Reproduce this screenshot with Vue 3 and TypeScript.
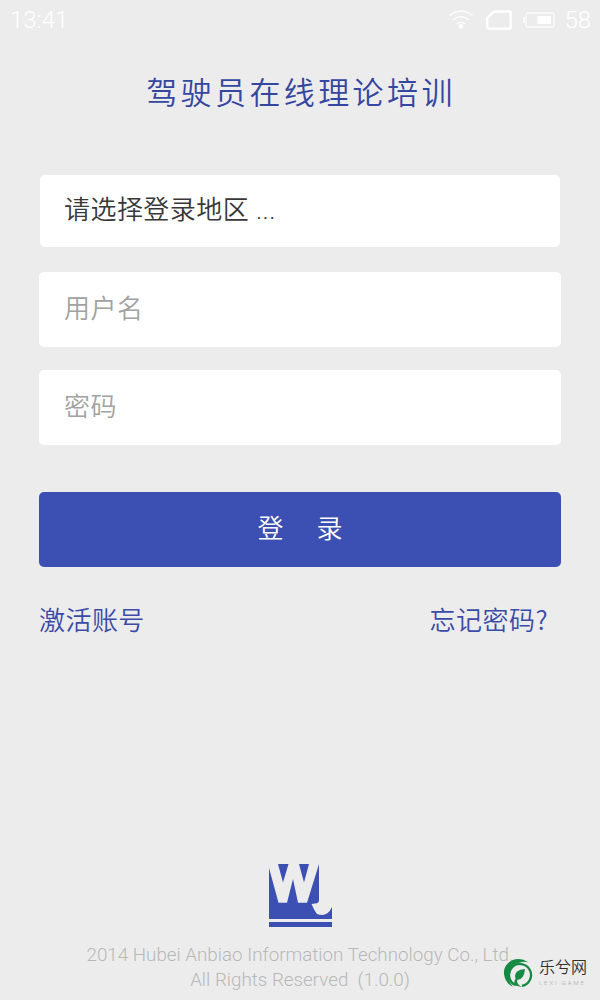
<script setup lang="ts">
import { ref } from 'vue'

const username = ref('')
const password = ref('')
const region = ref('请选择登录地区 ...')
const battery = 58
</script>

<template>
  <main class="screen">
    <header class="status">
      <span class="time">13:41</span>
      <svg class="wifi" width="26" height="22" viewBox="0 0 26 22" fill="none" stroke="#fff">
        <path d="M1.5 6.5Q13-2 24.500 6.500M5 11Q13 4.500 21 11M8.500 15Q13 11.500 17.500 15" stroke-width="1.500" opacity=".85" />
        <circle cx="13" cy="17.500" r="2.300" fill="#fff" stroke="none" />
      </svg>
      <svg class="sim" width="26" height="21" viewBox="0 0 26 21" fill="none">
        <path d="M8 1.500H23Q24.700 1.500 24.700 3.200V17Q24.700 18.700 23 18.700H3Q1.300 18.700 1.300 17V8Z" stroke="#fff" stroke-width="2.300" />
      </svg>
      <svg class="battery" width="32" height="16" viewBox="0 0 32 16">
        <rect x="3" y="1" width="28" height="14" rx="2" fill="none" stroke="#fff" stroke-width="1.300" opacity=".75" />
        <path d="M1 5V11" stroke="#fff" stroke-width="2" opacity=".75" />
        <rect x="14.500" y="4" width="13.500" height="8" fill="#fff" />
      </svg>
      <span class="level">{{ battery }}</span>
    </header>

    <h1>驾驶员在线理论培训</h1>

    <form @submit.prevent>
      <button type="button" class="field region">{{ region }}</button>
      <input v-model="username" class="field" type="text" placeholder="用户名" />
      <input v-model="password" class="field" type="password" placeholder="密码" />
      <button type="submit" class="submit"><span>登</span><span>录</span></button>
    </form>

    <nav class="links">
      <a>激活账号</a>
      <a>忘记密码?</a>
    </nav>

    <footer>
      <svg class="logo" width="63" height="63" viewBox="0 0 63 63" fill="#3b50b2">
        <path d="M0 4L9.500 38.700H18L24 15L29 38.700H38L50 0V36Q50 39.500 46 39.500L42.500 40Q45 46 48 50Q58 54 63 43V55H0Z" />
        <path d="M9 0H19.500L14 18.500ZM30 0H40L35 18.500Z" />
        <path d="M0 58H63V63H0Z" />
      </svg>
      <p>2014 Hubei Anbiao Information Technology Co., Ltd.</p>
      <p>All Rights Reserved&nbsp; (1.0.0)</p>
    </footer>

    <aside class="mark">
      <svg width="31" height="31" viewBox="0 0 31 31">
        <path d="M25.500 4.500C14-4 0 4 1 16Q2 25 10 29Q5 23 6 16Q8 5 19 4Q23 3.500 25.500 4.500Z" fill="#168a43" />
        <path d="M12.500 27A11 11 0 1 1 19 27.800" fill="none" stroke="#168a43" stroke-width="2.300" />
        <path d="M22 11Q12 12 12 18Q12 21 14 22Q21 22 22 11ZM13 20Q10 24 12 27.500L19 29Q12 26 15 20Z" fill="#168a43" />
      </svg>
      <div class="mark-text">
        <strong>乐兮网</strong>
        <small>LEXI GAME</small>
      </div>
    </aside>
  </main>
</template>

<style>
body { margin: 0; background: #ececec; }
</style>

<style scoped>
* { box-sizing: border-box; }
.screen {
  position: relative;
  width: 600px;
  height: 1000px;
  display: flex;
  flex-direction: column;
  overflow: hidden;
  background: #ececec;
  font-family: Roboto, "Noto Sans CJK SC", sans-serif;
  font-weight: 350;
}
.status {
  height: 40px;
  flex: none;
  display: flex;
  align-items: center;
  padding: 0 9px 0 10px;
  color: #fff;
  font-size: 24px;
}
.time { margin-right: auto; }
.sim { margin-left: 12px; }
.battery { margin: 0 9px 0 11px; }
h1 {
  margin: 31px 0 0;
  height: 45px;
  line-height: 45px;
  padding-left: 2px;
  text-align: center;
  font-size: 31px;
  font-weight: 350;
  letter-spacing: 3.400px;
  color: #3546a0;
}
form {
  margin: 59px 39px 0;
  display: flex;
  flex-direction: column;
}
.field {
  width: 100%;
  height: 75px;
  margin: 0 0 23px;
  padding: 0 25px 1px;
  border: 0;
  border-radius: 5px;
  background: #fff;
  font: inherit;
  font-size: 26px;
  letter-spacing: 0.450px;
  text-align: left;
  color: #383838;
}
.field.region {
  width: 520px;
  height: 72px;
  margin: 0 1px 25px;
  padding: 0 24px 7px;
}
.field::placeholder { color: #a2a2a2; opacity: 1; }
.submit {
  height: 75px;
  margin-top: 24px;
  padding: 0 0 6px;
  border: 0;
  border-radius: 5px;
  background: #3b50b2;
  color: #fff;
  font: inherit;
  font-size: 26px;
  display: flex;
  align-items: center;
  justify-content: center;
  gap: 33px;
}
.links {
  margin: 32px 52px 0 39px;
  display: flex;
  justify-content: space-between;
  line-height: 40px;
  font-family: "Noto Sans CJK SC", sans-serif;
  font-size: 26px;
  letter-spacing: 0.450px;
  color: #3b4ba8;
}
footer {
  margin-top: auto;
  height: 136px;
  display: flex;
  flex-direction: column;
  align-items: center;
  font-size: 18.800px;
  font-weight: 300;
  line-height: 25px;
  color: #b8b8b8;
}
footer p { margin: 0; white-space: nowrap; }
.logo { margin-bottom: 16px; flex: none; }
.mark {
  position: absolute;
  left: 503px;
  top: 958px;
  display: flex;
  gap: 5px;
}
.mark-text { display: flex; flex-direction: column; color: #303030; }
.mark strong { font-size: 16px; line-height: 20px; font-weight: 350; }
.mark small { font-size: 6px; line-height: 9px; letter-spacing: 1.900px; color: #aaa; white-space: nowrap; }
</style>
